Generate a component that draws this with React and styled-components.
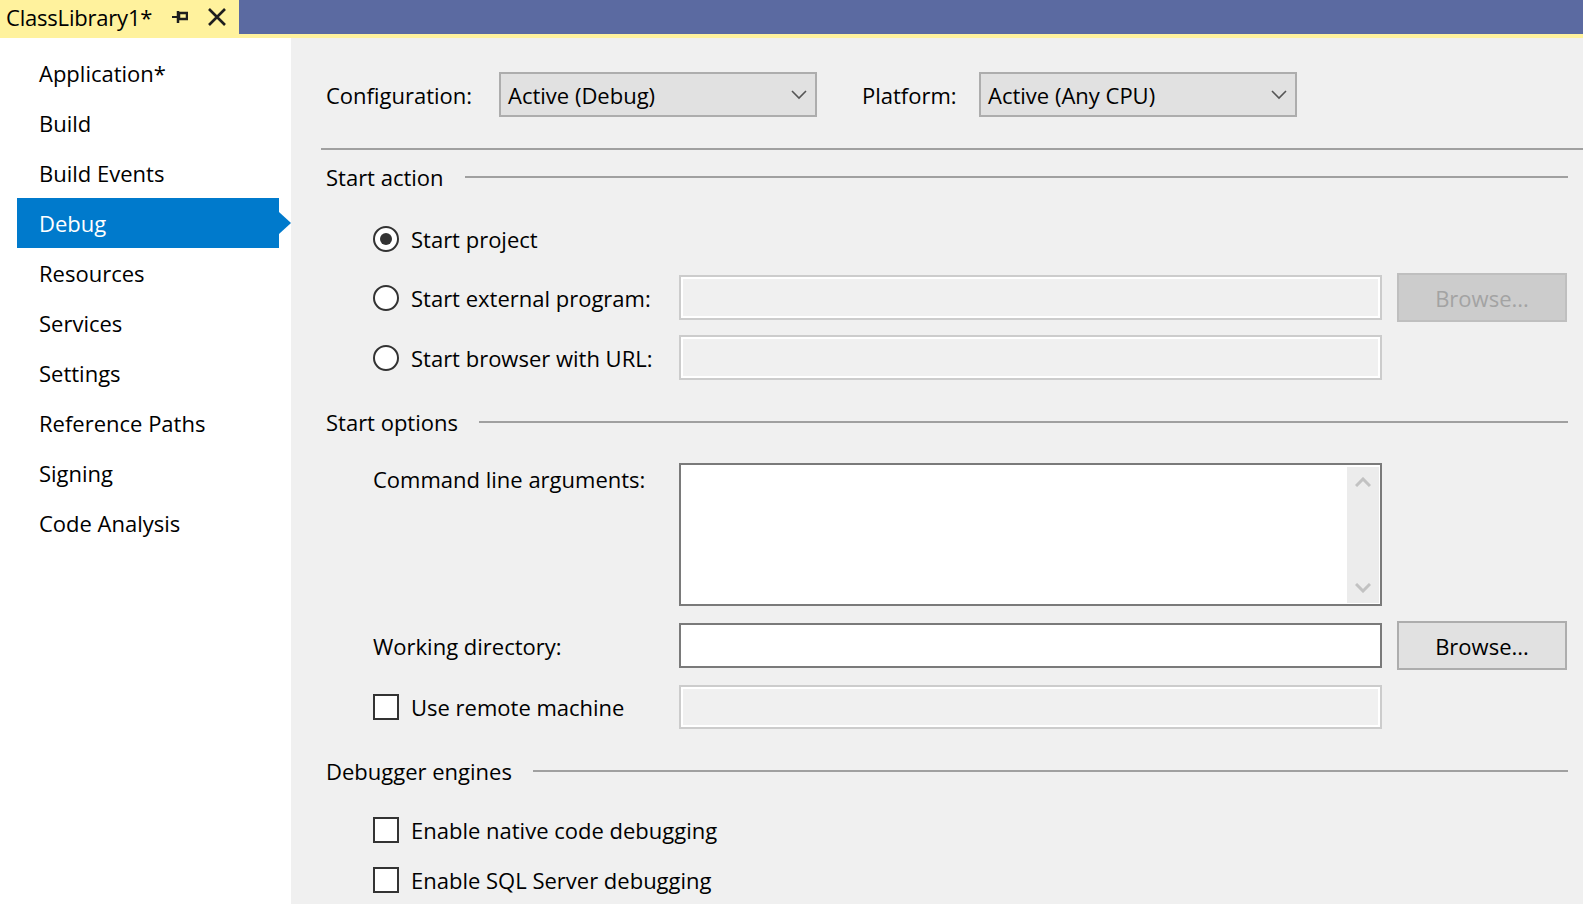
import React from "react";
import styled, { createGlobalStyle } from "styled-components";

const GlobalStyle = createGlobalStyle`
  html, body {
    margin: 0;
    padding: 0;
    height: 100%;
    overflow: hidden;
  }
  body {
    font-family: "Open Sans", "Noto Sans", sans-serif;
    font-size: 22px;
    color: #000;
  }
  #root {
    height: 100%;
  }
`;

const Window = styled.div`
  display: flex;
  flex-direction: column;
  height: 100vh;
`;

const TabWell = styled.div`
  display: flex;
  height: 34px;
  background: #5b6aa1;
  border-bottom: 4px solid #fff29d;
  flex-shrink: 0;
`;

const Tab = styled.div`
  display: flex;
  align-items: center;
  width: 239px;
  padding-left: 6px;
  box-sizing: border-box;
  background: #fff29d;
  white-space: nowrap;
`;

const TabTitle = styled.span`
  width: 166px;
  letter-spacing: -0.2px;
`;

const TabIcon = styled.span`
  display: inline-flex;
  align-items: center;
  margin-right: ${(p) => p.$gap || 0}px;
`;

const Body = styled.div`
  display: flex;
  flex: 1;
  min-height: 0;
`;

const Sidebar = styled.nav`
  width: 291px;
  flex-shrink: 0;
  background: #fff;
  padding-top: 10px;
  box-sizing: border-box;
`;

const NavItem = styled.div`
  position: relative;
  display: flex;
  align-items: center;
  height: 50px;
  width: 262px;
  margin-left: 17px;
  padding-left: 22px;
  box-sizing: border-box;
  background: ${(p) => (p.$active ? "#007acc" : "transparent")};
  color: ${(p) => (p.$active ? "#fff" : "#000")};

  &::after {
    content: "";
    display: ${(p) => (p.$active ? "block" : "none")};
    position: absolute;
    right: -12px;
    top: 14px;
    border-left: 12px solid #007acc;
    border-top: 11px solid transparent;
    border-bottom: 11px solid transparent;
  }
`;

const Main = styled.main`
  flex: 1;
  background: #f0f0f0;
  padding-left: 30px;
  overflow: hidden;
`;

const ConfigRow = styled.div`
  display: flex;
  align-items: center;
  margin-top: 34px;
  padding-left: 5px;
`;

const FieldLabel = styled.span`
  width: ${(p) => p.$w}px;
  flex-shrink: 0;
  white-space: nowrap;
`;

const Dropdown = styled.div`
  display: flex;
  align-items: center;
  justify-content: space-between;
  width: 318px;
  height: 45px;
  box-sizing: border-box;
  border: 2px solid #adadad;
  background: #e1e1e1;
  padding: 0 8px 0 7px;
  margin-right: ${(p) => p.$mr || 0}px;
`;

const Separator = styled.hr`
  margin: 31px 0 0;
  border: none;
  height: 2px;
  background: #a0a0a0;
`;

const SectionHeader = styled.div`
  display: flex;
  align-items: center;
  gap: 21px;
  height: 30px;
  margin-top: ${(p) => p.$mt}px;
  padding-left: 5px;
  margin-right: 15px;

  &::after {
    content: "";
    flex: 1;
    height: 2px;
    background: #a0a0a0;
  }
`;

const OptionRow = styled.div`
  display: grid;
  grid-template-columns: 291px 703px 170px;
  column-gap: 15px;
  align-items: ${(p) => (p.$top ? "start" : "center")};
  height: ${(p) => p.$h || 45}px;
  margin-top: ${(p) => p.$mt}px;
  margin-left: 52px;
`;

const Choice = styled.label`
  display: flex;
  align-items: center;
  gap: 12px;
  white-space: nowrap;
`;

const PlainLabel = styled.span`
  white-space: nowrap;
  line-height: 32px;
`;

const RadioCircle = styled.span`
  position: relative;
  width: 26px;
  height: 26px;
  box-sizing: border-box;
  border-radius: 50%;
  border: 2px solid #333;
  background: #fff;
  flex-shrink: 0;

  &::after {
    content: "";
    display: ${(p) => (p.$checked ? "block" : "none")};
    position: absolute;
    left: 5px;
    top: 5px;
    width: 12px;
    height: 12px;
    border-radius: 50%;
    background: #333;
  }
`;

const CheckBox = styled.span`
  width: 26px;
  height: 26px;
  box-sizing: border-box;
  border: 2px solid #333;
  background: #fff;
  flex-shrink: 0;
`;

const TextBox = styled.div`
  height: ${(p) => p.$h || 45}px;
  box-sizing: border-box;
  border: 2px solid ${(p) => (p.$disabled ? "#cccccc" : "#7a7a7a")};
  background: ${(p) => (p.$disabled ? "#f0f0f0" : "#fff")};
  box-shadow: ${(p) => (p.$disabled ? "inset 0 0 0 2px #fff" : "none")};
`;

const TextArea = styled.div`
  display: flex;
  justify-content: flex-end;
  height: 143px;
  box-sizing: border-box;
  border: 2px solid #7a7a7a;
  background: #fff;
  padding: 2px 1px 1px 0;
`;

const ScrollBar = styled.div`
  display: flex;
  flex-direction: column;
  justify-content: space-between;
  align-items: center;
  width: 32px;
  background: #ececec;
  padding: 10px 0 10px;
  box-sizing: border-box;
`;

const Button = styled.div`
  display: flex;
  align-items: center;
  justify-content: center;
  height: 49px;
  box-sizing: border-box;
  border: 2px solid ${(p) => (p.$disabled ? "#bfbfbf" : "#adadad")};
  background: ${(p) => (p.$disabled ? "#cccccc" : "#e1e1e1")};
  color: ${(p) => (p.$disabled ? "#a3a3a3" : "#000")};
`;

const Chevron = ({ up, color = "#555", weight = 1.6 }) => (
  <svg width="16" height="10" viewBox="0 0 16 10">
    <polyline
      points={up ? "1,9 8,2 15,9" : "1,1 8,8 15,1"}
      fill="none"
      stroke={color}
      strokeWidth={weight}
    />
  </svg>
);

const PinIcon = () => (
  <svg width="16" height="12" viewBox="0 0 16 12">
    <line x1="0" y1="6" x2="6" y2="6" stroke="#1e1e1e" strokeWidth="2" />
    <line x1="6" y1="0" x2="6" y2="12" stroke="#1e1e1e" strokeWidth="2.5" />
    <rect x="7" y="2" width="8" height="6" fill="none" stroke="#1e1e1e" strokeWidth="2.5" />
  </svg>
);

const CloseIcon = () => (
  <svg width="20" height="18" viewBox="0 0 20 18">
    <path d="M2 1 L18 17 M18 1 L2 17" stroke="#1e1e1e" strokeWidth="2.6" />
  </svg>
);

const pages = [
  "Application*",
  "Build",
  "Build Events",
  "Debug",
  "Resources",
  "Services",
  "Settings",
  "Reference Paths",
  "Signing",
  "Code Analysis",
];

export default function App() {
  return (
    <Window>
      <GlobalStyle />
      <TabWell>
        <Tab>
          <TabTitle>ClassLibrary1*</TabTitle>
          <TabIcon $gap={19}>
            <PinIcon />
          </TabIcon>
          <TabIcon>
            <CloseIcon />
          </TabIcon>
        </Tab>
      </TabWell>
      <Body>
        <Sidebar>
          {pages.map((p) => (
            <NavItem key={p} $active={p === "Debug"}>
              {p}
            </NavItem>
          ))}
        </Sidebar>
        <Main>
          <ConfigRow>
            <FieldLabel $w={173}>Configuration:</FieldLabel>
            <Dropdown $mr={45}>
              <span>Active (Debug)</span>
              <Chevron />
            </Dropdown>
            <FieldLabel $w={117}>Platform:</FieldLabel>
            <Dropdown>
              <span>Active (Any CPU)</span>
              <Chevron />
            </Dropdown>
          </ConfigRow>
          <Separator />

          <SectionHeader $mt={12}>Start action</SectionHeader>
          <OptionRow $mt={24}>
            <Choice>
              <RadioCircle $checked />
              Start project
            </Choice>
          </OptionRow>
          <OptionRow $mt={12}>
            <Choice>
              <RadioCircle />
              Start external program:
            </Choice>
            <TextBox $disabled />
            <Button $disabled>Browse...</Button>
          </OptionRow>
          <OptionRow $mt={17}>
            <Choice>
              <RadioCircle />
              Start browser with URL:
            </Choice>
            <TextBox $disabled />
          </OptionRow>

          <SectionHeader $mt={27}>Start options</SectionHeader>
          <OptionRow $mt={26} $h={143} $top>
            <PlainLabel>Command line arguments:</PlainLabel>
            <TextArea>
              <ScrollBar>
                <Chevron up color="#c2c2c2" weight={3} />
                <Chevron color="#c2c2c2" weight={3} />
              </ScrollBar>
            </TextArea>
          </OptionRow>
          <OptionRow $mt={15} $h={49}>
            <PlainLabel>Working directory:</PlainLabel>
            <TextBox />
            <Button>Browse...</Button>
          </OptionRow>
          <OptionRow $mt={14}>
            <Choice>
              <CheckBox />
              Use remote machine
            </Choice>
            <TextBox $disabled $h={44} />
          </OptionRow>

          <SectionHeader $mt={27}>Debugger engines</SectionHeader>
          <OptionRow $mt={21}>
            <Choice>
              <CheckBox />
              Enable native code debugging
            </Choice>
          </OptionRow>
          <OptionRow $mt={5}>
            <Choice>
              <CheckBox />
              Enable SQL Server debugging
            </Choice>
          </OptionRow>
        </Main>
      </Body>
    </Window>
  );
}
